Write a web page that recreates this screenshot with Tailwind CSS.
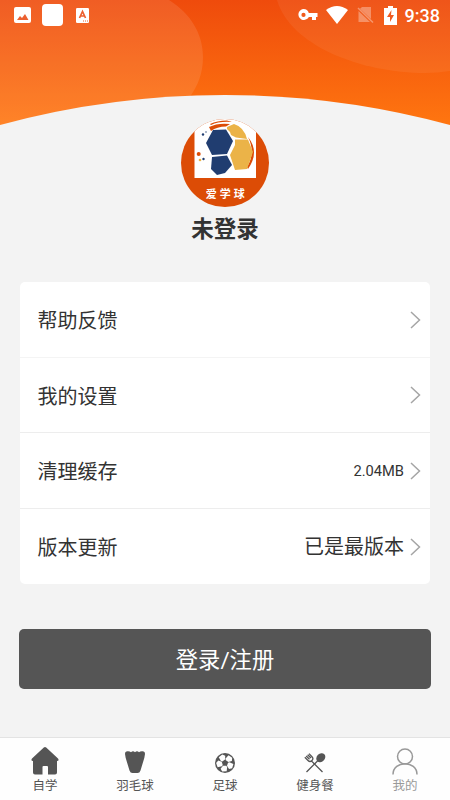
<!DOCTYPE html>
<html lang="zh-CN">
<head>
<meta charset="utf-8">
<title>我的</title>
<script src="https://cdn.jsdelivr.net/npm/@tailwindcss/browser@4"></script>
</head>
<body class="bg-[#f3f3f3] font-[Roboto,'Noto_Sans_CJK_SC',sans-serif] text-[#333]">
<div class="relative flex h-[800px] w-[450px] flex-col overflow-hidden">
  <svg class="absolute left-0 top-0" width="450" height="126" viewBox="0 0 450 126">
    <defs>
      <linearGradient id="sky" x1="0" y1="0" x2="0" y2="1"><stop offset="0" stop-color="#ef4b0c"/><stop offset="1" stop-color="#ff7610"/></linearGradient>
    </defs>
    <rect width="450" height="126" fill="url(#sky)"/>
    <path d="M0 0H169C191 14 203 34 203 57C203 73 198 86 189 98V126H0Z" fill="#fff" fill-opacity=".1"/>
    <path d="M277 0C290 45 360 73 425 73Q438 73 450 71V0Z" fill="#fff" fill-opacity=".06"/>
    <path d="M0 125A859 859 0 0 1 450 125V126H0Z" fill="#f3f3f3"/>
  </svg>

  <header class="relative flex h-[30px] items-center justify-between pl-[14px] pr-[10px]">
    <div class="flex items-center">
      <svg width="17" height="16" viewBox="0 0 17 16"><rect width="17" height="16" rx="2" fill="#fff"/><path d="M3 13L6 9L8 11L11 7L14.500 13Z" fill="#ec6030"/></svg>
      <div class="ml-[11px] h-[22px] w-[21px] rounded-[4px] bg-white"></div>
      <svg class="ml-[13px]" width="13" height="15" viewBox="0 0 13 15"><rect width="13" height="15" rx="1.200" fill="#fff"/><path d="M3.500 10L6.500 3.500L9.500 10M4.600 8H8.400" fill="none" stroke="#ec6030" stroke-width="1.700"/><path d="M7 13h1M9 13h1M11 13h1" stroke="#ec6030"/></svg>
    </div>
    <div class="flex items-center">
      <svg width="20" height="12" viewBox="0 0 20 12"><path fill="#fff" fill-rule="evenodd" d="M5.500 0A5.500 5.500 0 0 1 10.800 4H19.500V8H18V11H14V8H10.800A5.500 5.500 0 1 1 5.500 0ZM5.500 3.800A2.100 2.100 0 1 0 5.500 8A2.100 2.100 0 1 0 5.500 3.800Z"/></svg>
      <svg class="ml-[8px]" width="22" height="18" viewBox="0 0 22 18"><path d="M0 4Q11 -4 22 4L11 18Z" fill="#fff"/></svg>
      <svg class="ml-[9px]" width="17" height="18" viewBox="0 0 17 18"><path d="M5 1H14V13L3 2.800ZM1.500 5L13 16H1.500Z" fill="#fff" fill-opacity=".33"/><path d="M1 2L16 16.500" stroke="#fff" stroke-opacity=".36" stroke-width="1.500"/></svg>
      <svg class="ml-[10px]" width="13" height="19" viewBox="0 0 13 19"><path d="M4 0H9V2H13V19H0V2H4Z" fill="#fff"/><path d="M7.500 4L3 11H6V16L10 9H7Z" fill="#ef5a20"/></svg>
      <span class="ml-[8px] pt-[2px] text-[18px] leading-none font-medium text-white">9:38</span>
    </div>
  </header>

  <section class="relative flex h-[252px] flex-col items-center pt-[89px]">
    <svg width="88" height="88" viewBox="0 0 88 88">
      <defs><clipPath id="disc"><circle cx="44" cy="44" r="44"/></clipPath></defs>
      <g clip-path="url(#disc)">
        <rect width="88" height="88" fill="#dc4c06"/>
        <path d="M13.500 0H75V59H13.500Z" fill="#fff"/>
        <path d="M28 8Q37 3.500 49 5L45 7.500Q36 7.500 30 12ZM29 5Q36 1.500 46 1.500L51 3Q38 2 30 6Z" fill="#dc4c06"/>
        <path d="M67 18Q79 33 67 50L66 48Q75 34 67 18" fill="#dc4c06"/>
        <path d="M32 11L45 10.500L52 22L46 35L31 36L25 24Z" fill="#203d70"/>
        <path d="M46 8L53 5Q63 8 66 20L55 18.500L50 16Q49 12 46 10Z" fill="#ebb348"/>
        <path d="M54 20.500H67L72 33L66 50L54 51L49 36L54 26Z" fill="#ebb348"/>
        <path d="M31 38L46 36.500L51 46L44 54L36 56L30 50Z" fill="#203d70"/>
        <g fill="#203d70"><circle cx="22" cy="15.500" r="1.200"/><circle cx="25" cy="13" r=".7"/><circle cx="22.500" cy="40" r="1.200"/></g>
        <circle cx="17.700" cy="35" r="2" fill="#dc4c06"/><circle cx="19" cy="41" r="1.300" fill="#ebb348"/>
      </g>
      <text x="44.800" y="78.500" text-anchor="middle" font-family="Noto Sans CJK SC, sans-serif" font-size="11" font-weight="700" letter-spacing="3" dx="1" fill="#fff">爱学球</text>
    </svg>
    <h1 class="mt-[6px] text-[22.500px] leading-[32px] font-bold">未登录</h1>
  </section>

  <main class="mx-5 h-[302px] rounded-[5px] bg-white text-[20px]">
    <div class="flex h-[76px] items-center border-b border-[#f4f4f4] pl-[17.500px] pr-[9px]"><span class="flex-1 pt-[2px]">帮助反馈</span>
      <svg width="11" height="18" viewBox="0 0 11 18" fill="none" stroke="#a5a5a5" stroke-width="1.500"><path d="M1 1L9.500 9L1 17"/></svg></div>
    <div class="flex h-[75px] items-center border-b border-[#ededed] pl-[17.500px] pr-[9px]"><span class="flex-1 pt-[3px]">我的设置</span>
      <svg width="11" height="18" viewBox="0 0 11 18" fill="none" stroke="#a5a5a5" stroke-width="1.500"><path d="M1 1L9.500 9L1 17"/></svg></div>
    <div class="flex h-[76px] items-center border-b border-[#ededed] pl-[17.500px] pr-[9px]"><span class="flex-1 pt-[3px]">清理缓存</span><span class="mr-[6px] pt-px text-[14.700px]">2.04MB</span>
      <svg width="11" height="18" viewBox="0 0 11 18" fill="none" stroke="#a5a5a5" stroke-width="1.500"><path d="M1 1L9.500 9L1 17"/></svg></div>
    <div class="flex h-[75px] items-center pl-[17.500px] pr-[9px]"><span class="flex-1 pt-[2px]">版本更新</span><span class="mr-[6px]">已是最版本</span>
      <svg width="11" height="18" viewBox="0 0 11 18" fill="none" stroke="#a5a5a5" stroke-width="1.500"><path d="M1 1L9.500 9L1 17"/></svg></div>
  </main>

  <button class="mx-[19px] mt-[45px] h-[60px] rounded-[5px] bg-[#555] pt-[3px] text-[22.300px] text-white">登录/注册</button>

  <nav class="mt-auto grid h-[63px] grid-cols-5 border-t border-[#e3e3e3] bg-[#fefefe] text-[12.500px] leading-[18px] text-[#555]">
    <div class="flex flex-col items-center"><div class="flex h-[39px] items-end pb-[2px]">
      <svg width="28" height="28" viewBox="0 0 28 28" fill="#555"><path d="M12.800 .6Q14 -.5 15.200 .6L27 11.500Q28.500 14 26 14V25.500Q26 27.500 24 27.500H17V20Q17 19 16 19H12.500Q11.500 19 11.500 20V27.500H4Q2 27.500 2 25.500V14Q-.5 14 1 11.500Z"/></svg></div><span>自学</span></div>
    <div class="flex flex-col items-center"><div class="flex h-[39px] items-end pb-[4px]">
      <svg width="20" height="22" viewBox="0 0 20 22" fill="#555"><path d="M0 3Q0 0 3 .3Q5 .3 6 1.200Q8 -.5 10 1.200Q12 -.5 14 1.200Q15 .3 17 .3Q20 0 20 3L19.300 7L15.500 19.500Q14.700 22 12.500 22H7.500Q5.300 22 4.500 19.500L.7 7Z"/></svg></div><span>羽毛球</span></div>
    <div class="flex flex-col items-center"><div class="flex h-[39px] items-end pb-[4px]">
      <svg class="mr-px" width="20" height="20" viewBox="0 0 20 20"><circle cx="10" cy="10" r="10" fill="#555"/><g fill="#fefefe"><path id="panel" d="M10.600 5.500L13.500 2.300L17.200 4.800L16.900 8L13.300 9L10.600 7Z"/><use href="#panel" transform="rotate(72 10 10)"/><use href="#panel" transform="rotate(144 10 10)"/><use href="#panel" transform="rotate(216 10 10)"/><use href="#panel" transform="rotate(288 10 10)"/></g></svg></div><span>足球</span></div>
    <div class="flex flex-col items-center"><div class="flex h-[39px] items-end pb-[4px]">
      <svg width="22" height="20" viewBox="0 0 22 20" fill="none" stroke="#555" stroke-width="1.300"><path d="M7 7.500L18.500 19M2.500 19L14 7.500M.8 4.200L4 7.500Q6 9.500 8 7.500Q9.800 5.500 8 3.700L5 .6M2.200 3L5.500 6.300M3.600 1.700L7 5"/><ellipse cx="16.800" cy="4.700" rx="5" ry="4" transform="rotate(-45 16.800 4.700)" fill="#555" stroke="none"/></svg></div><span>健身餐</span></div>
    <div class="flex flex-col items-center text-[#999]"><div class="flex h-[39px] items-end pb-[2px]">
      <svg width="26" height="27" viewBox="0 0 26 27" fill="none" stroke="#999" stroke-width="1.500"><circle cx="13" cy="8.500" r="7.500"/><path d="M1 26.500C1 12 25 12 25 26.500"/></svg></div><span>我的</span></div>
  </nav>
</div>
</body>
</html>
